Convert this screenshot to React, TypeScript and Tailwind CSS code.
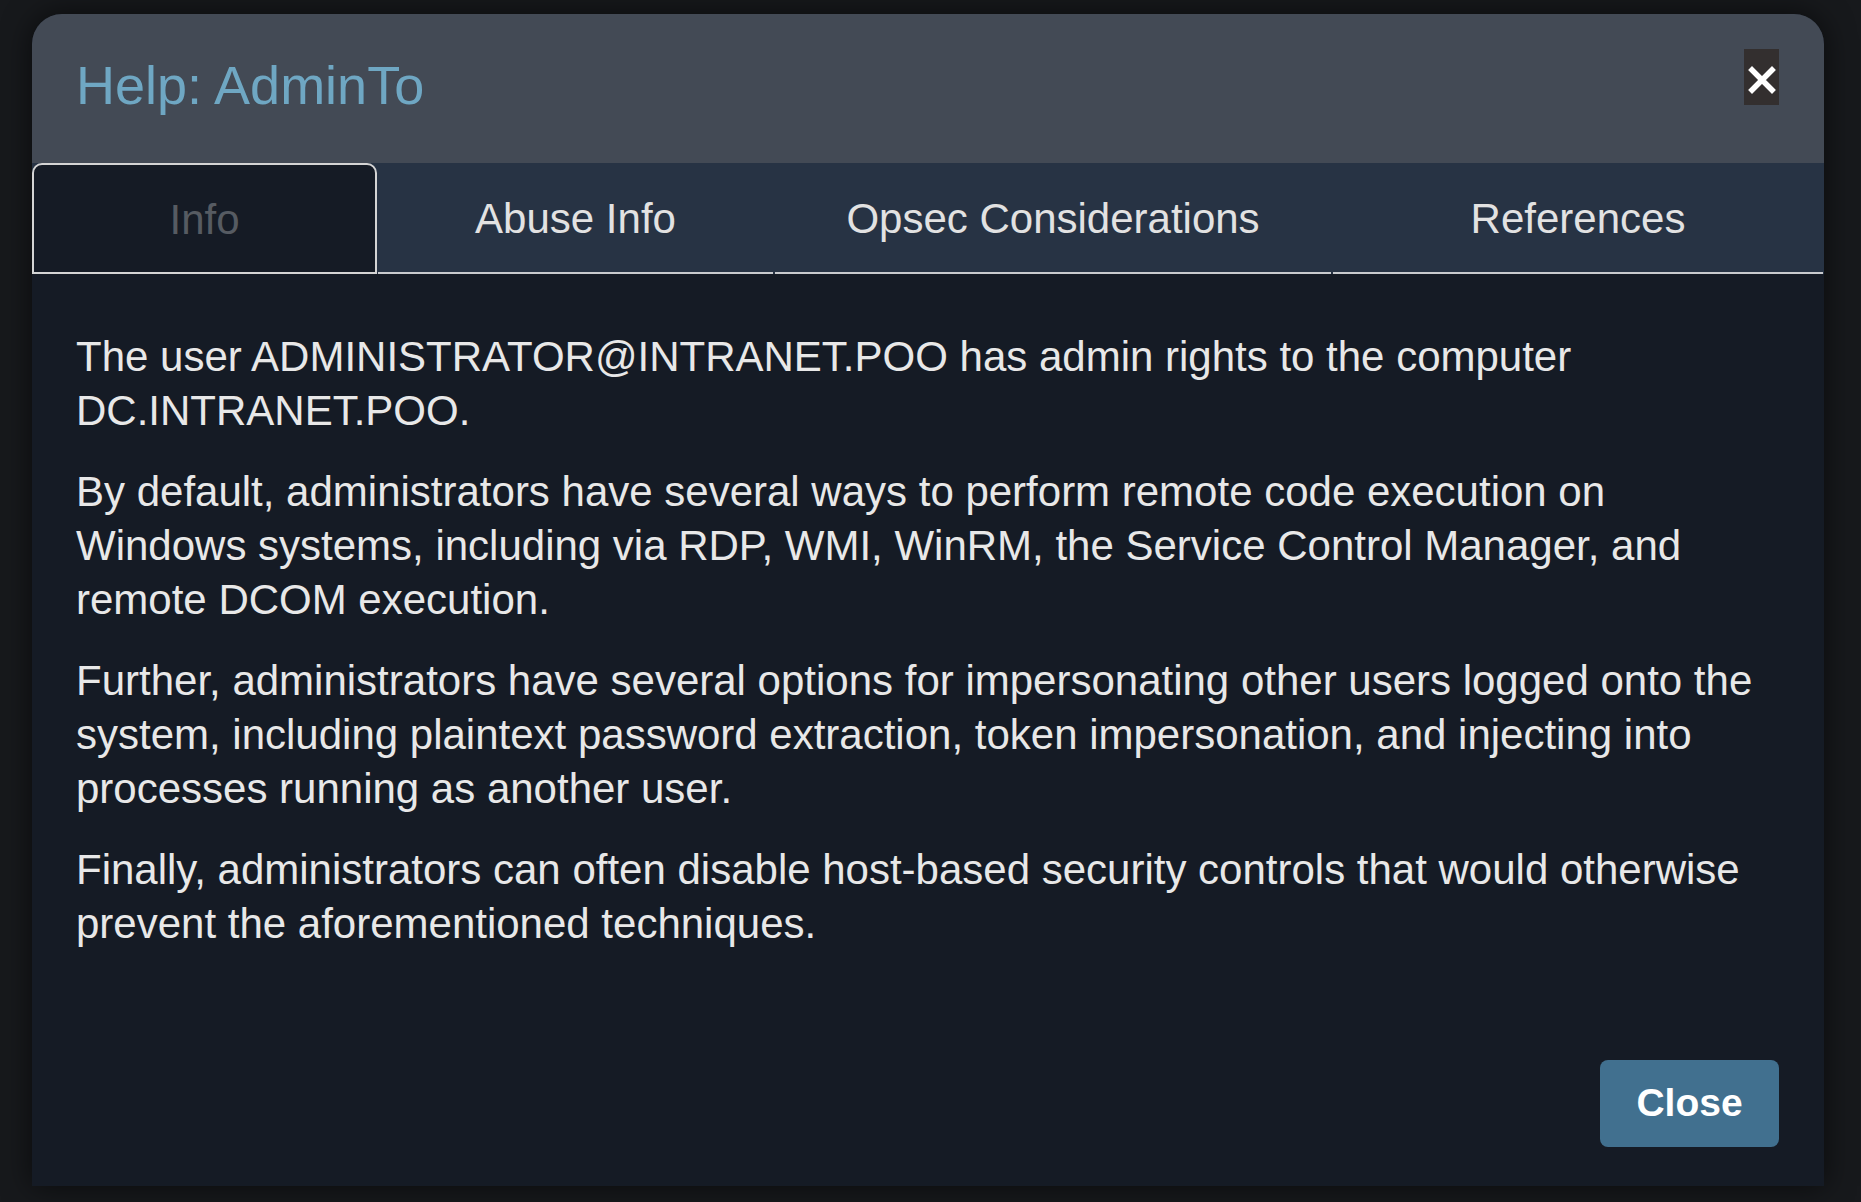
import React from 'react'

const tabs = [
  { label: 'Info', width: 'w-[345px]', active: true },
  { label: 'Abuse Info', width: 'w-[397px]', active: false },
  { label: 'Opsec Considerations', width: 'w-[558px]', active: false },
  { label: 'References', width: 'w-[492px]', active: false },
]

const paragraphs = [
  'The user ADMINISTRATOR@INTRANET.POO has admin rights to the computer DC.INTRANET.POO.',
  'By default, administrators have several ways to perform remote code execution on Windows systems, including via RDP, WMI, WinRM, the Service Control Manager, and remote DCOM execution.',
  'Further, administrators have several options for impersonating other users logged onto the system, including plaintext password extraction, token impersonation, and injecting into processes running as another user.',
  'Finally, administrators can often disable host-based security controls that would otherwise prevent the aforementioned techniques.',
]

export default function App() {
  return (
    <div className="min-h-[1202px] w-full bg-[#17191c] pl-[32px] pt-[14px] font-['Liberation_Sans',Arial,sans-serif]">
      <div className="flex h-[1172px] w-[1792px] flex-col overflow-hidden rounded-t-[30px] bg-[#151b25] shadow-[0_0_30px_rgba(0,0,0,0.6)]">
        {/* header */}
        <div className="flex h-[149px] shrink-0 items-start justify-between bg-[#434a55] pl-[44px] pr-[45px]">
          <h4 className="mt-[40px] text-[54px] leading-[62px] text-[#6fa7c3]">Help: AdminTo</h4>
          <button className="mt-[35px] flex h-[56px] w-[35px] items-center justify-center bg-[#332f2f] pt-[5px]">
            <svg width="28" height="28" viewBox="0 0 28 28">
              <path d="M4 4 L24 24 M24 4 L4 24" stroke="#ffffff" strokeWidth="5.5" strokeLinecap="square" />
            </svg>
          </button>
        </div>

        {/* tabs */}
        <div className="flex h-[111px] shrink-0 bg-[#273344]">
          {tabs.map((t) =>
            t.active ? (
              <div
                key={t.label}
                className={`${t.width} flex items-center justify-center rounded-t-[10px] border-2 border-[#d4d4d4] bg-[#151b25] pt-[2px] text-[42px] text-[#565b62]`}
              >
                {t.label}
              </div>
            ) : (
              <div key={t.label} className={`${t.width} flex flex-col`}>
                <div className="flex flex-1 items-center justify-center pt-[2px] text-[42px] text-[#e2e2e2]">{t.label}</div>
                <div className="mx-[1px] h-[2px] bg-[#c9cbce]" />
              </div>
            ),
          )}
        </div>

        {/* body */}
        <div className="flex-1 pl-[44px] pr-[60px] pt-[56px] text-[42px] leading-[54px] text-[#e8e8e8]">
          {paragraphs.map((p) => (
            <p key={p} className="mb-[27px]">
              {p}
            </p>
          ))}
        </div>

        {/* footer */}
        <div className="flex shrink-0 justify-end pb-[39px] pr-[45px]">
          <button className="h-[87px] w-[179px] rounded-[8px] bg-[#41708f] text-[39px] font-bold text-white">Close</button>
        </div>
      </div>
    </div>
  )
}
